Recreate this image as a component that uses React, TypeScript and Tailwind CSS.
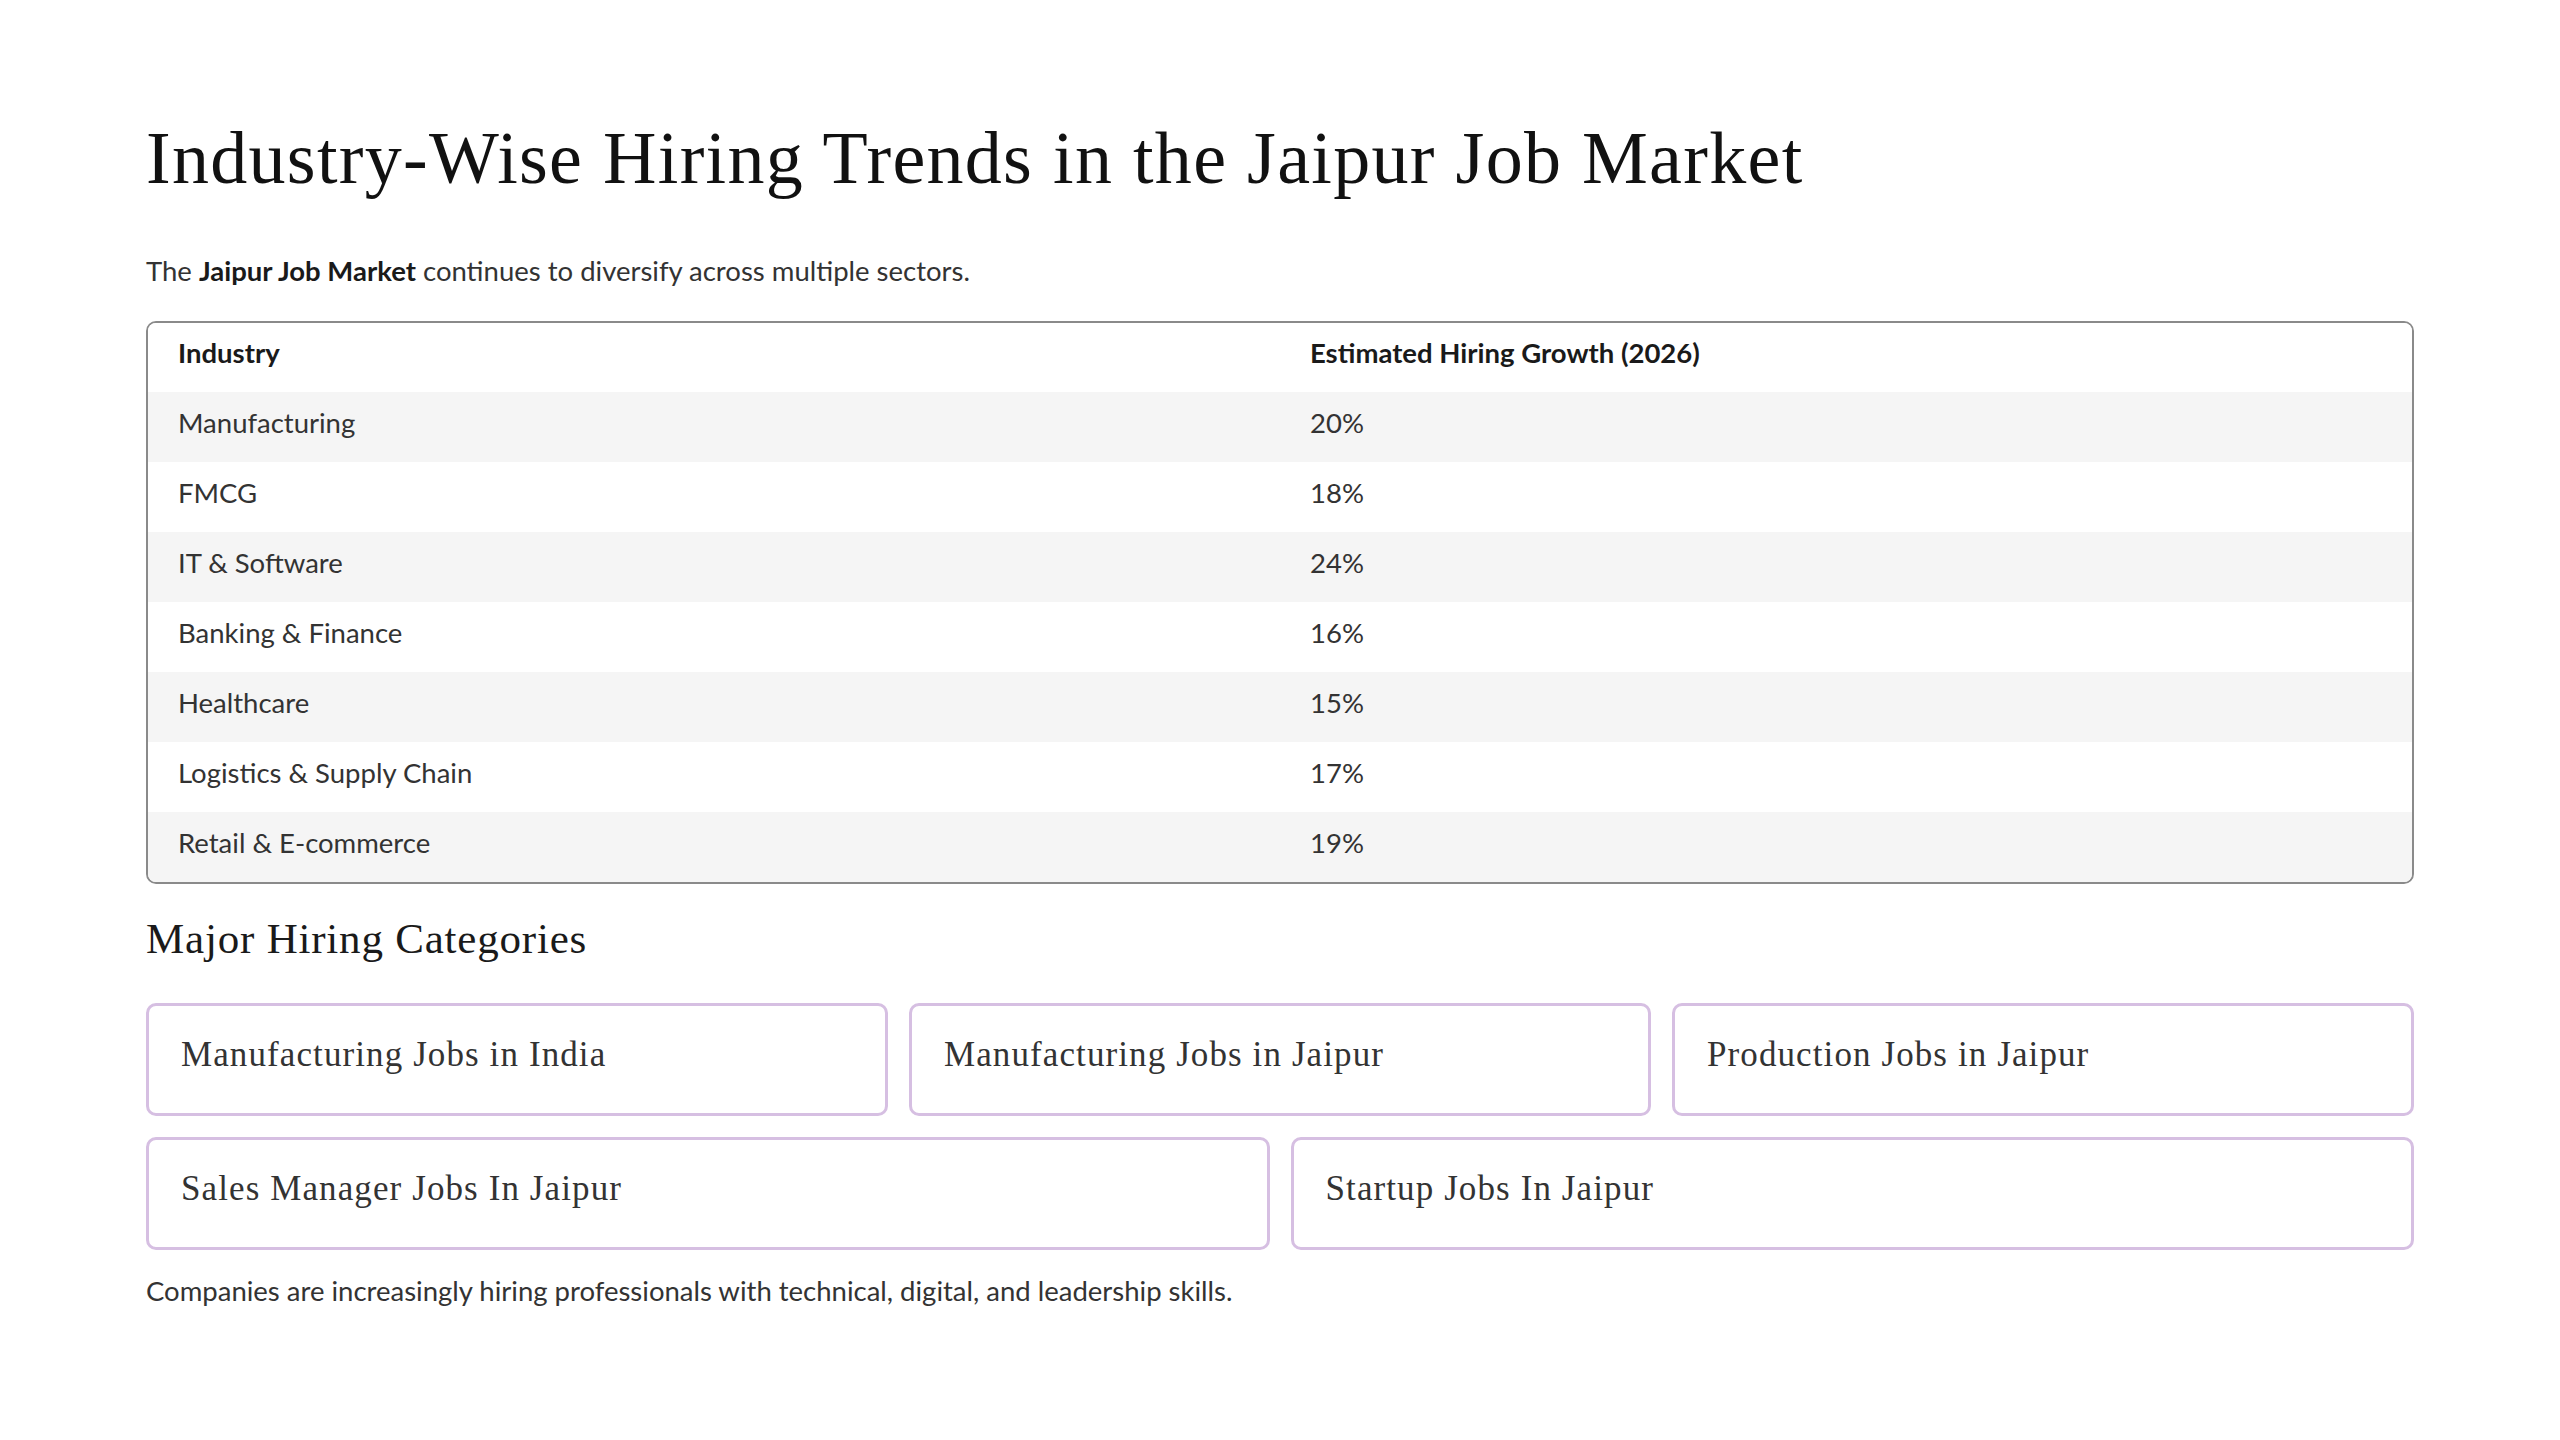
const ROWS: { industry: string; growth: string }[] = [
  { industry: "Manufacturing", growth: "20%" },
  { industry: "FMCG", growth: "18%" },
  { industry: "IT & Software", growth: "24%" },
  { industry: "Banking & Finance", growth: "16%" },
  { industry: "Healthcare", growth: "15%" },
  { industry: "Logistics & Supply Chain", growth: "17%" },
  { industry: "Retail & E-commerce", growth: "19%" },
];

const TOP_CATEGORIES = [
  "Manufacturing Jobs in India",
  "Manufacturing Jobs in Jaipur",
  "Production Jobs in Jaipur",
];

const BOTTOM_CATEGORIES = ["Sales Manager Jobs In Jaipur", "Startup Jobs In Jaipur"];

const serif = "font-['Liberation_Serif','Times_New_Roman',serif]";
const sans = "font-['Lato','Noto_Sans',sans-serif]";

function CategoryCard({ label }: { label: string }) {
  return (
    <a
      href="#"
      className={`${serif} flex h-[113px] items-start rounded-[10px] border-[3px] border-[#d6bfe2] bg-white px-[32px] pt-[25px] text-[35px] leading-[48px] tracking-[1.1px] text-[#333333]`}
    >
      {label}
    </a>
  );
}

export default function App() {
  return (
    <div className="min-h-screen bg-white">
      <section className="px-[146px] pt-[115px] pb-[120px]">
        {/* ── Heading ─────────────────────────────────────────────── */}
        <h1 className={`${serif} text-[74px] leading-[86px] tracking-[1.3px] text-[#111111]`}>
          Industry-Wise Hiring Trends in the Jaipur Job Market
        </h1>

        <p className={`${sans} mt-[50px] text-[27.5px] leading-[39px] text-[#333333]`}>
          The <strong className="font-bold text-[#1a1a1a]">Jaipur Job Market</strong> continues to
          diversify across multiple sectors.
        </p>

        {/* ── Table ───────────────────────────────────────────────── */}
        <div className="mt-[31px] overflow-hidden rounded-[10px] border-2 border-[#8a8a8a]">
          <table className={`${sans} w-full table-fixed border-collapse text-[27.5px] text-[#333333]`}>
            <thead>
              <tr className="h-[69px] bg-white">
                <th className="w-1/2 px-[30px] pb-[10px] text-left font-bold text-[#1a1a1a]">Industry</th>
                <th className="w-1/2 px-[30px] pb-[10px] text-left font-bold text-[#1a1a1a]">
                  Estimated Hiring Growth (2026)
                </th>
              </tr>
            </thead>
            <tbody>
              {ROWS.map((row, i) => (
                <tr key={row.industry} className={`h-[70px] ${i % 2 === 0 ? "bg-[#f5f5f5]" : "bg-white"}`}>
                  <td className="px-[30px] pb-[8px]">{row.industry}</td>
                  <td className="px-[30px] pb-[8px]">{row.growth}</td>
                </tr>
              ))}
            </tbody>
          </table>
        </div>

        {/* ── Categories ──────────────────────────────────────────── */}
        <h2 className={`${serif} mt-[31px] text-[43px] leading-[48px] tracking-[0.8px] text-[#1a1a1a]`}>
          Major Hiring Categories
        </h2>

        <div className="mt-[40px] grid grid-cols-6 gap-x-[21px] gap-y-[21px]">
          {TOP_CATEGORIES.map((c) => (
            <div key={c} className="col-span-2">
              <CategoryCard label={c} />
            </div>
          ))}
          {BOTTOM_CATEGORIES.map((c) => (
            <div key={c} className="col-span-3">
              <CategoryCard label={c} />
            </div>
          ))}
        </div>

        <p className={`${sans} mt-[21px] text-[27.5px] leading-[39px] text-[#333333]`}>
          Companies are increasingly hiring professionals with technical, digital, and leadership skills.
        </p>
      </section>
    </div>
  );
}
